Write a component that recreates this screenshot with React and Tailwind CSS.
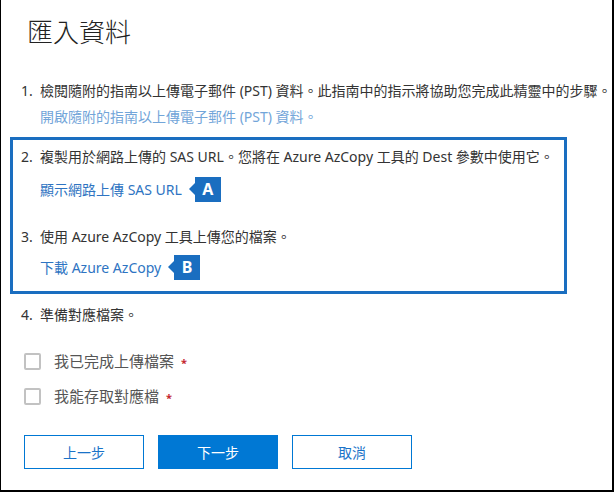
import React from "react";

const font = { fontFamily: '"Noto Sans", "Noto Sans CJK TC", sans-serif' };

function Badge({ letter }) {
  return (
    <span className="flex items-center">
      <span className="w-0 h-0 border-y-[6px] border-y-transparent border-r-[6px] border-r-[#1a6ec0]" />
      <span className="flex items-center justify-center w-[26px] h-[25px] bg-[#1a6ec0] text-white text-[16px] font-bold leading-none">
        {letter}
      </span>
    </span>
  );
}

function Step({ n, children }) {
  return (
    <div className="flex h-[20px] items-center text-[14px] leading-[20px] text-[#333]">
      <span className="w-[19px]">{n}.</span>
      <span>{children}</span>
    </div>
  );
}

function Check({ label }) {
  return (
    <div className="flex h-[20px] items-center pl-[23px]">
      <span className="w-[17px] h-[17px] border-2 border-[#c2c2c2] rounded-[2px]" />
      <span className="ml-[13px] text-[15px] leading-[20px] text-[#555]">{label}</span>
      <span className="ml-[7px] mt-[2px] text-[11px] font-bold text-[#c4262e] leading-none">*</span>
    </div>
  );
}

export default function App() {
  return (
    <div
      style={font}
      className="w-[614px] h-[492px] bg-white border-l-[1px] border-r-2 border-b-2 border-black overflow-hidden"
    >
      <h1 className="mt-[16px] ml-[26px] h-[32px] flex items-center text-[26px] leading-[32px] font-light text-[#222]">
        匯入資料
      </h1>

      <div className="mt-[33px] pl-[20px]">
        <Step n="1">
          檢閱隨附的指南以上傳電子郵件 (PST) 資料。此指南中的指示將協助您完成此精靈中的步驟。
        </Step>
        <div className="mt-[6px] ml-[19px] h-[20px] flex items-center text-[14px] leading-[20px] text-[#72a5d9]">
          開啟隨附的指南以上傳電子郵件 (PST) 資料。
        </div>
      </div>

      <div className="mt-[10px] ml-[9px] w-[557px] h-[157px] border-[3px] border-[#1a6ec0] pl-[8px] pt-[7px]">
        <Step n="2">
          複製用於網路上傳的 SAS URL。您將在 Azure AzCopy 工具的 Dest 參數中使用它。
        </Step>
        <div className="mt-[10px] ml-[19px] h-[24px] flex items-center gap-[7px] text-[14px] text-[#2e74c2]">
          <span>顯示網路上傳 SAS URL</span>
          <Badge letter="A" />
        </div>
        <div className="mt-[26px]">
          <Step n="3">使用 Azure AzCopy 工具上傳您的檔案。</Step>
        </div>
        <div className="mt-[8px] ml-[19px] h-[24px] flex items-center gap-[7px] text-[14px] text-[#2e74c2]">
          <span>下載 Azure AzCopy</span>
          <Badge letter="B" />
        </div>
      </div>

      <div className="mt-[11px] pl-[20px]">
        <Step n="4">準備對應檔案。</Step>
      </div>

      <div className="mt-[26px]">
        <Check label="我已完成上傳檔案" />
      </div>
      <div className="mt-[15px]">
        <Check label="我能存取對應檔" />
      </div>

      <div className="mt-[29px] ml-[23px] flex gap-[14px] text-[14px]">
        <button className="w-[120px] h-[34px] border border-[#0078d4] text-[#1a73c8] bg-white">
          上一步
        </button>
        <button className="w-[120px] h-[34px] bg-[#0078d4] text-white">
          下一步
        </button>
        <button className="w-[120px] h-[34px] border border-[#0078d4] text-[#1a73c8] bg-white">
          取消
        </button>
      </div>
    </div>
  );
}
